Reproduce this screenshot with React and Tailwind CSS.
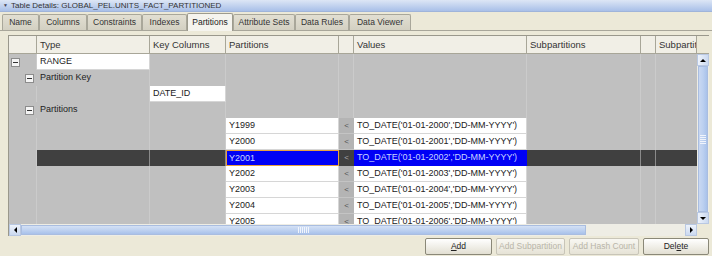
import React from "react";

const COLS = "grid-cols-[28px_113px_76px_113px_15px_173px_114px_15px_41px]";

function Minus() {
  return (
    <span className="inline-flex w-[9px] h-[9px] border border-[#8c8c8c] bg-[#f4f4f4] items-center justify-center">
      <span className="block w-[5px] h-px bg-[#333]" />
    </span>
  );
}

const tabs = ["Name", "Columns", "Constraints", "Indexes", "Partitions", "Attribute Sets", "Data Rules", "Data Viewer"];
const tabW = ["w-[37px]", "w-[48px]", "w-[55px]", "w-[45px]", "w-[46px]", "w-[62px]", "w-[54px]", "w-[62px]"];

const parts = [
  ["Y1999", "2000"],
  ["Y2000", "2001"],
  ["Y2001", "2002"],
  ["Y2002", "2003"],
  ["Y2003", "2004"],
  ["Y2004", "2005"],
  ["Y2005", "2006"],
];

function Gray({ last }) {
  return <div className={`h-[16px] ${last ? "" : "border-r border-[#cbcbcb]"}`} />;
}

function White({ children }) {
  return (
    <div className="h-[16px] bg-white border-r border-b border-[#d6d6d6] pl-[3px] leading-[15px] text-[#222] whitespace-nowrap overflow-hidden">
      {children}
    </div>
  );
}

function PartRow({ name, year }) {
  const sel = name === "Y2001";
  if (sel) {
    return (
      <div className={`grid ${COLS} h-[16px] bg-[#c0c0c0]`}>
        <div className="h-[16px] border-r border-[#cbcbcb]" />
        <div className="h-[16px] bg-[#404040] border-r border-[#8a8a8a]" />
        <div className="h-[16px] bg-[#404040] border-r border-[#8a8a8a]" />
        <div className="h-[16px] bg-[#0000f5] border border-[#e8a040] pl-[2px] leading-[14px] text-[#c8d4ff]">{name}</div>
        <div className="h-[16px] bg-[#404040] text-[#aaa] text-center leading-[15px] text-[8px]">&lt;</div>
        <div className="h-[16px] bg-[#0000f5] pl-[3px] leading-[15px] text-[#c8d4ff] whitespace-nowrap overflow-hidden">
          TO_DATE('01-01-{year}','DD-MM-YYYY')
        </div>
        <div className="h-[16px] bg-[#404040] border-r border-[#8a8a8a]" />
        <div className="h-[16px] bg-[#404040] border-r border-[#8a8a8a]" />
        <div className="h-[16px] bg-[#404040]" />
      </div>
    );
  }
  return (
    <div className={`grid ${COLS} h-[16px] bg-[#c0c0c0]`}>
      <Gray />
      <Gray />
      <Gray />
      <White>{name}</White>
      <div className="h-[16px] bg-[#b4b4b4] text-[#555] text-center leading-[15px] text-[8px] border-b border-[#c4c4c4]">&lt;</div>
      <White>TO_DATE('01-01-{year}','DD-MM-YYYY')</White>
      <Gray />
      <Gray />
      <Gray last />
    </div>
  );
}

function Btn({ children, w, disabled }) {
  return (
    <div
      className={`${w} h-[17px] rounded-[2px] border flex items-center justify-center text-[8.5px] whitespace-nowrap overflow-hidden ${
        disabled
          ? "border-[#c8c5b8] text-[#b8b5a8] bg-gradient-to-b from-[#f8f7f2] to-[#e6e3d6]"
          : "border-[#8a8878] text-[#222] bg-gradient-to-b from-[#ffffff] to-[#e2dfd2]"
      }`}
    >
      {children}
    </div>
  );
}

export default function App() {
  return (
    <div
      className="w-[712px] h-[256px] bg-[#ece9d8] overflow-hidden text-[9px] text-[#222]"
      style={{ fontFamily: '"Liberation Sans", Arial, sans-serif' }}
    >
      {/* title */}
      <div className="h-[12px] bg-gradient-to-b from-[#dde6f5] to-[#a9c0e8] flex items-center pl-[3px] text-[8px] text-[#333] leading-none border-b border-[#9fb4da] whitespace-nowrap">
        <span className="text-[5px] mr-[3px] text-[#445]">▼</span>
        Table Details: GLOBAL_PEL.UNITS_FACT_PARTITIONED
      </div>
      {/* tabs */}
      <div className="h-[19px] flex items-end pl-[2px] border-b border-[#a8a69a]">
        {tabs.map((t, i) =>
          t === "Partitions" ? (
            <div
              key={t}
              className={`${tabW[i]} h-[18px] -mb-px bg-[#f5f4ee] border border-b-0 border-[#9d9b8e] rounded-t-[2px] flex items-center justify-center text-[#222] text-[8.5px] whitespace-nowrap`}
            >
              {t}
            </div>
          ) : (
            <div
              key={t}
              className={`${tabW[i]} h-[16px] bg-gradient-to-b from-[#e2dfd2] to-[#d3d0c2] border border-b-0 border-[#a9a79a] rounded-t-[2px] flex items-center justify-center text-[#333] text-[8.5px] whitespace-nowrap`}
            >
              {t}
            </div>
          )
        )}
      </div>
      {/* content */}
      <div className="pl-[8px] pr-[3px] pt-[4px]">
        <div className="border-l border-t border-[#9a988c] bg-[#ece9d8]">
          {/* header */}
          <div className="flex h-[18px]">
            <div className={`grid ${COLS} h-[18px]`}>
              {["", "Type", "Key Columns", "Partitions", "", "Values", "Subpartitions", "", "Subpartit"].map((h, i) => (
                <div
                  key={i}
                  className="h-[18px] bg-[#f1efe6] border-r border-b border-[#a8a698] pl-[3px] leading-[17px] text-[9.5px] text-[#333] whitespace-nowrap overflow-hidden"
                >
                  {h}
                </div>
              ))}
            </div>
            <div className="w-[12px] h-[18px] bg-[#ece9d8] border-b border-[#a8a698]" />
          </div>
          {/* body */}
          <div className="flex h-[170px]">
            <div className="w-[688px] h-[170px] overflow-hidden bg-[#c0c0c0]">
              <div className={`grid ${COLS} h-[16px]`}>
                <div className="h-[16px] pl-[2px] flex items-center border-r border-[#cbcbcb]">
                  <Minus />
                </div>
                <White>RANGE</White>
                <Gray />
                <Gray />
                <Gray />
                <Gray />
                <Gray />
                <Gray />
                <Gray last />
              </div>
              <div className={`grid ${COLS} h-[16px]`}>
                <div className="h-[16px] pl-[16px] flex items-center">
                  <Minus />
                </div>
                <div className="h-[16px] pl-[3px] leading-[15px] border-r border-[#cbcbcb]">Partition Key</div>
                <Gray />
                <Gray />
                <Gray />
                <Gray />
                <Gray />
                <Gray />
                <Gray last />
              </div>
              <div className={`grid ${COLS} h-[16px]`}>
                <div className="h-[16px] border-r border-[#cbcbcb]" />
                <Gray />
                <White>DATE_ID</White>
                <Gray />
                <Gray />
                <Gray />
                <Gray />
                <Gray />
                <Gray last />
              </div>
              <div className={`grid ${COLS} h-[16px]`}>
                <div className="h-[16px] pl-[16px] flex items-center">
                  <Minus />
                </div>
                <div className="h-[16px] pl-[3px] leading-[15px] border-r border-[#cbcbcb]">Partitions</div>
                <Gray />
                <Gray />
                <Gray />
                <Gray />
                <Gray />
                <Gray />
                <Gray last />
              </div>
              {parts.map(([n, y]) => (
                <PartRow key={n} name={n} year={y} />
              ))}
            </div>
            {/* vertical scrollbar */}
            <div className="w-[12px] h-[170px] flex flex-col bg-[#eeede5]">
              <div className="h-[12px] border border-[#b9c8e2] bg-gradient-to-r from-[#eef3fb] to-[#cbd9f0] flex items-center justify-center">
                <span className="block w-0 h-0 border-l-[3px] border-r-[3px] border-b-[3px] border-l-transparent border-r-transparent border-b-black" />
              </div>
              <div className="flex-1 mx-px border border-[#a9bde0] bg-gradient-to-r from-[#c9d8f2] via-[#bcd0f0] to-[#a9c2ea] flex items-center justify-center">
                <div className="w-[6px] h-[10px] bg-[repeating-linear-gradient(0deg,#f0f4fc_0px,#f0f4fc_1px,transparent_1px,transparent_2px)]" />
              </div>
              <div className="h-[12px] border border-[#b9c8e2] bg-gradient-to-r from-[#eef3fb] to-[#cbd9f0] flex items-center justify-center">
                <span className="block w-0 h-0 border-l-[3px] border-r-[3px] border-t-[3px] border-l-transparent border-r-transparent border-t-black" />
              </div>
            </div>
          </div>
          {/* horizontal scrollbar */}
          <div className="flex h-[12px]">
            <div className="w-[688px] h-[12px] flex bg-[#eeede5]">
              <div className="w-[12px] h-[12px] border border-[#b9c8e2] bg-gradient-to-b from-[#eef3fb] to-[#cbd9f0] flex items-center justify-center">
                <span className="block w-0 h-0 border-t-[3px] border-b-[3px] border-r-[3px] border-t-transparent border-b-transparent border-r-black" />
              </div>
              <div className="w-[565px] my-px border border-[#a9bde0] bg-gradient-to-b from-[#d4e1f5] via-[#bfd2f0] to-[#a8c1ea] flex items-center justify-center">
                <div className="w-[12px] h-[6px] bg-[repeating-linear-gradient(90deg,#f0f4fc_0px,#f0f4fc_1px,transparent_1px,transparent_2px)]" />
              </div>
              <div className="flex-1" />
              <div className="w-[12px] h-[12px] border border-[#b9c8e2] bg-gradient-to-b from-[#eef3fb] to-[#cbd9f0] flex items-center justify-center">
                <span className="block w-0 h-0 border-t-[3px] border-b-[3px] border-l-[3px] border-t-transparent border-b-transparent border-l-black" />
              </div>
            </div>
            <div className="w-[12px] h-[12px] bg-[#ece9d8]" />
          </div>
        </div>
        {/* buttons */}
        <div className="flex justify-end gap-[4px] mt-[2px]">
          <Btn w="w-[67px]">
            <span className="underline">A</span>dd
          </Btn>
          <Btn w="w-[69px]" disabled>
            Add Subpartition
          </Btn>
          <Btn w="w-[70px]" disabled>
            Add Hash Count
          </Btn>
          <Btn w="w-[66px]">
            Del<span className="underline">e</span>te
          </Btn>
        </div>
      </div>
    </div>
  );
}
